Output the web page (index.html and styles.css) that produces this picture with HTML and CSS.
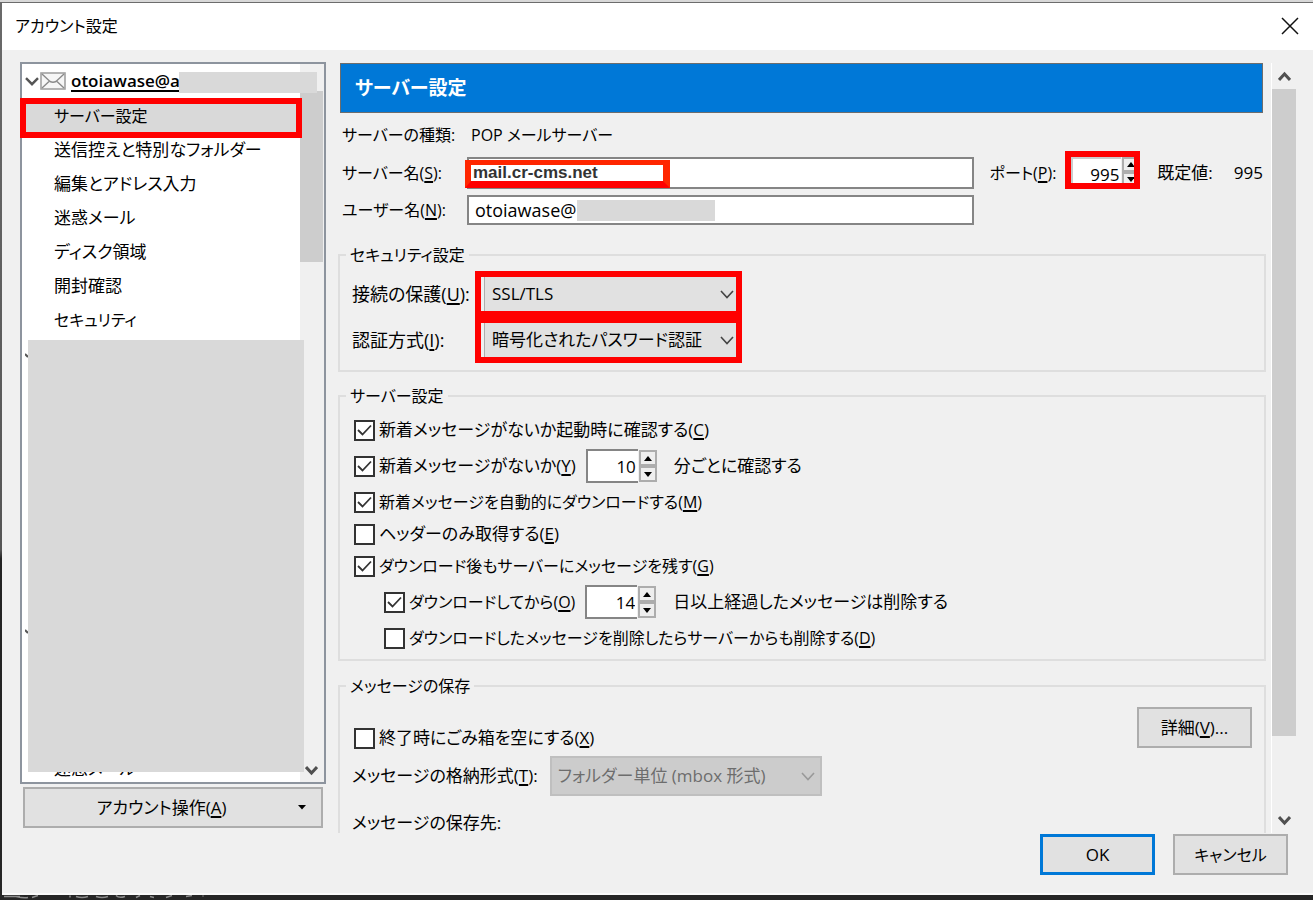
FILE: index.html
```html
<!DOCTYPE html>
<html lang="ja">
<head>
<meta charset="utf-8">
<title>アカウント設定</title>
<link rel="stylesheet" href="styles.css">
</head>
<body>
<div class="desktop">
  <main class="window">
    <header class="titlebar">
      <h1 class="titlebar-text">アカウント設定</h1>
      <button class="close" type="button" aria-label="閉じる">
        <svg width="18" height="18" viewBox="0 0 18 18"><path d="M1 1L17 17M17 1L1 17" fill="none" stroke="#111" stroke-width="1.5"/></svg>
      </button>
    </header>

    <div class="body">
      <nav class="sidebar">
        <div class="tree">
          <div class="tree-main">
            <div class="account">
              <svg class="account-chevron" width="14" height="9" viewBox="0 0 14 9"><path d="M1 1.2L7 7.2L13 1.2" fill="none" stroke="#555" stroke-width="2.4"/></svg>
              <svg class="account-mail" width="26" height="18" viewBox="0 0 26 18"><rect x="1" y="1" width="24" height="16" fill="#f6f6f6" stroke="#a2a2a2" stroke-width="1.6"/><path d="M2 2L10 9.5Q13 11 16 9.5L24 2M2 16L9 9.5M24 16L17 9.5" fill="none" stroke="#8a8a8a" stroke-width="1.4"/></svg>
              <a class="account-name" href="#account">otoiawase@a</a>
              <span class="account-mask"></span>
            </div>
            <ul class="pages">
              <li class="page selected compact"><a href="#server">サーバー設定</a></li>
              <li class="page"><a href="#copies">送信控えと特別なフォルダー</a></li>
              <li class="page"><a href="#composition">編集とアドレス入力</a></li>
              <li class="page"><a href="#junk">迷惑メール</a></li>
              <li class="page"><a href="#disk">ディスク領域</a></li>
              <li class="page"><a href="#receipts">開封確認</a></li>
              <li class="page compact"><a href="#security">セキュリティ</a></li>
            </ul>
            <div class="masked">
              <svg class="tick tick-first" width="3" height="5" viewBox="0 0 3 5"><path d="M0 1L3 4" stroke="#555" stroke-width="2"/></svg>
              <svg class="tick tick-second" width="3" height="5" viewBox="0 0 3 5"><path d="M0 1L3 4" stroke="#555" stroke-width="2"/></svg>
            </div>
            <div class="page-cut"><a href="#junk2">迷惑メール</a></div>
          </div>
          <div class="tree-scroll">
            <div class="tree-thumb"></div>
            <svg class="tree-down" width="13" height="11" viewBox="0 0 13 11"><path d="M1 2L6.500 8L12 2" fill="none" stroke="#505050" stroke-width="3"/></svg>
          </div>
        </div>
        <button class="button actions" type="button">
          <span class="actions-text">アカウント操作(<u>A</u>)</span>
          <svg width="8" height="5" viewBox="0 0 8 5"><path d="M0 0H8L4 4.500Z" fill="#000"/></svg>
        </button>
      </nav>

      <section class="pane">
        <form class="content">
          <h2 class="banner">サーバー設定</h2>

          <div class="server">
            <span class="compact">サーバーの種類:</span>
            <span class="compact kind-value">POP メールサーバー</span>
            <span></span>
            <label class="compact" for="host">サーバー名(<u>S</u>):</label>
            <div class="field">
              <input class="text host" id="host" type="text" value="mail.cr-cms.net">
              <span class="host-mark"></span>
            </div>
            <div class="port">
              <label class="compact" for="port">ポート(<u>P</u>):</label>
              <div class="port-mark">
                <div class="spin">
                  <input class="spin-value" id="port" type="text" inputmode="numeric" value="995">
                  <div class="spin-buttons">
                    <button class="step" type="button" aria-label="増やす"><svg width="8" height="5" viewBox="0 0 8 5"><path d="M0 5H8L4 0Z"/></svg></button>
                    <button class="step" type="button" aria-label="減らす"><svg width="8" height="5" viewBox="0 0 8 5"><path d="M0 0H8L4 5Z"/></svg></button>
                  </div>
                </div>
              </div>
              <span>既定値:</span>
              <span class="port-default">995</span>
            </div>
            <label class="compact" for="user">ユーザー名(<u>N</u>):</label>
            <div class="field">
              <input class="text user" id="user" type="text" value="otoiawase@">
              <span class="user-mask"></span>
            </div>
          </div>

          <fieldset class="group security">
            <legend class="compact">セキュリティ設定</legend>
            <div class="choice">
              <label for="conn">接続の保護(<u>U</u>):</label>
              <div class="choice-mark"><select class="select" id="conn"><option>SSL/TLS</option></select></div>
            </div>
            <div class="choice">
              <label for="auth">認証方式(<u>I</u>):</label>
              <div class="choice-mark"><select class="select" id="auth"><option>暗号化されたパスワード認証</option></select></div>
            </div>
          </fieldset>

          <fieldset class="group options">
            <legend class="compact">サーバー設定</legend>
            <div class="option"><input class="check" type="checkbox" id="c1" checked><label for="c1">新着メッセージがないか起動時に確認する(<u>C</u>)</label></div>
            <div class="option tall">
              <input class="check" type="checkbox" id="c2" checked><label for="c2">新着メッセージがないか(<u>Y</u>)</label>
              <div class="spin boxed">
                <input class="spin-value" id="minutes" type="text" inputmode="numeric" value="10">
                <div class="spin-buttons">
                  <button class="step" type="button" aria-label="増やす"><svg width="8" height="5" viewBox="0 0 8 5"><path d="M0 5H8L4 0Z"/></svg></button>
                  <button class="step" type="button" aria-label="減らす"><svg width="8" height="5" viewBox="0 0 8 5"><path d="M0 0H8L4 5Z"/></svg></button>
                </div>
              </div>
              <label for="minutes">分ごとに確認する</label>
            </div>
            <div class="option compact"><input class="check" type="checkbox" id="c3" checked><label for="c3">新着メッセージを自動的にダウンロードする(<u>M</u>)</label></div>
            <div class="option"><input class="check" type="checkbox" id="c4"><label for="c4">ヘッダーのみ取得する(<u>E</u>)</label></div>
            <div class="option compact"><input class="check" type="checkbox" id="c5" checked><label for="c5">ダウンロード後もサーバーにメッセージを残す(<u>G</u>)</label></div>
            <div class="option tall nested">
              <input class="check" type="checkbox" id="c6" checked><label class="compact" for="c6">ダウンロードしてから(<u>O</u>)</label>
              <div class="spin boxed">
                <input class="spin-value" id="days" type="text" inputmode="numeric" value="14">
                <div class="spin-buttons">
                  <button class="step" type="button" aria-label="増やす"><svg width="8" height="5" viewBox="0 0 8 5"><path d="M0 5H8L4 0Z"/></svg></button>
                  <button class="step" type="button" aria-label="減らす"><svg width="8" height="5" viewBox="0 0 8 5"><path d="M0 0H8L4 5Z"/></svg></button>
                </div>
              </div>
              <label for="days">日以上経過したメッセージは削除する</label>
            </div>
            <div class="option nested compact"><input class="check" type="checkbox" id="c7"><label for="c7">ダウンロードしたメッセージを削除したらサーバーからも削除する(<u>D</u>)</label></div>
          </fieldset>

          <fieldset class="group storage">
            <legend class="compact">メッセージの保存</legend>
            <div class="storage-grid">
              <div class="storage-main">
                <div class="option"><input class="check" type="checkbox" id="c8"><label for="c8">終了時にごみ箱を空にする(<u>X</u>)</label></div>
                <div class="store">
                  <label for="store">メッセージの格納形式(<u>T</u>):</label>
                  <select class="select store-select" id="store" disabled><option>フォルダー単位 (mbox 形式)</option></select>
                </div>
                <p class="store-path">メッセージの保存先:</p>
              </div>
              <button class="button" type="button">詳細(<u>V</u>)...</button>
            </div>
          </fieldset>
        </form>
        <div class="scroll">
          <svg width="13" height="11" viewBox="0 0 13 11"><path d="M1 9L6.500 3L12 9" fill="none" stroke="#505050" stroke-width="3"/></svg>
          <div class="scroll-track"><div class="scroll-thumb"></div></div>
          <svg width="13" height="11" viewBox="0 0 13 11"><path d="M1 2L6.500 8L12 2" fill="none" stroke="#505050" stroke-width="3"/></svg>
        </div>
      </section>
    </div>

    <footer class="footer">
      <button class="button primary" type="button">OK</button>
      <button class="button compact" type="button">キャンセル</button>
    </footer>
  </main>
  <svg class="behind" width="210" height="4" viewBox="0 0 210 4"><path d="M2 1H18M14 1Q22 3 26 2M30 2L36 0M68 0V2M74 1Q80 3 86 1M94 1Q100 3 106 1M114 0Q117 3 123 1M134 2L138 0M148 1L152 2M164 2L170 0M184 1L190 0M201 0V1" fill="none" stroke="#8c8c8c" stroke-width="1.500"/></svg>
</div>
</body>
</html>
```
FILE: styles.css
```css
* { box-sizing: border-box; }

body {
  margin: 0;
  color: #000;
  background: #262626;
  font: 17px/24px "Open Sans", "Noto Sans CJK JP", sans-serif;
  font-feature-settings: "palt";
}

input, select, button { font: inherit; font-feature-settings: inherit; color: inherit; margin: 0; }
a { color: inherit; text-decoration: none; }
u { text-underline-offset: 2px; text-decoration-thickness: 2px; }
label, legend, span, a, button { white-space: nowrap; }
.compact { font-size: 16px; }

.desktop {
  height: 100vh;
  min-height: 600px;
  display: flex;
  flex-direction: column;
  padding-left: 2px;
  background: linear-gradient(#6a6a6a, #555 61%, #222 62%, #262626);
  border-top: 2px solid #d8d8d8;
  overflow: hidden;
}

.window {
  flex: 1;
  min-height: 0;
  display: flex;
  flex-direction: column;
  background: #f0f0f0;
  border-top: 1px solid #6c6c6c;
  border-bottom: 2px solid #fafafa;
}

.behind { display: block; flex: none; height: 5px; width: 210px; box-shadow: 0 0 0 100vw #262626; clip-path: inset(0 -100vw 0 0); background: #262626; }

.titlebar {
  flex: none;
  display: flex;
  align-items: center;
  justify-content: space-between;
  height: 47px;
  padding: 0 14px 2px 13px;
  background: #fff;
}
.titlebar-text { margin: 0; font-size: 16px; font-weight: 400; }
.close { display: flex; padding: 0; border: 0; background: none; }

.body {
  flex: 1;
  min-height: 0;
  display: flex;
  gap: 12px;
  padding: 12px 17px 0 18px;
}

/* account tree */
.sidebar { flex: none; width: 306px; display: flex; flex-direction: column; padding-bottom: 5px; }
.tree { flex: 1; min-height: 0; display: flex; border: 2px solid #8d949e; background: #fff; }
.tree-main { flex: 1; min-width: 0; display: flex; flex-direction: column; }
.account { position: relative; flex: none; display: flex; align-items: center; height: 34px; padding-left: 3px; }
.account-mail { margin: 0 5px 0 1px; }
.account-name { width: 108px; overflow: hidden; font-weight: 600; text-decoration: underline; text-decoration-thickness: 2px; text-underline-offset: 3px; }
.account-mask { position: absolute; z-index: 2; left: 157px; top: 8px; width: 138px; height: 21px; background: #d9d9d9; }
.pages { flex: none; margin: 0; padding: 1px 0 0; list-style: none; }
.page { position: relative; height: 34px; padding-left: 32px; line-height: 34px; }
.page.selected { background: #d9d9d9; }
.page.selected::after { content: ""; position: absolute; z-index: 2; inset: -1px -2px -5px -2px; border: 6px solid #f00; }
.masked { position: relative; z-index: 1; flex: 1; min-height: 0; margin: 3px -4px 0 6px; background: #d9d9d9; }
.tick { position: absolute; left: -3px; }
.tick-first { top: 3%; }
.tick-second { top: 67%; }
.page-cut { flex: none; display: flex; align-items: flex-end; height: 10px; padding-left: 32px; line-height: 26px; overflow: hidden; }
.tree-scroll { flex: none; width: 24px; display: flex; flex-direction: column; justify-content: space-between; align-items: center; padding: 27px 1px 6px 0; background: #f0f0f0; }
.tree-thumb { width: 100%; height: 25%; background: #cdcdcd; }

.button {
  flex: none;
  min-width: 115px;
  height: 41px;
  padding: 0 12px;
  border: 2px solid #adadad;
  border-radius: 0;
  background: #e1e1e1;
}
.button.primary { border: 3px solid #0078d7; }
.actions { display: flex; align-items: center; margin: 3px 3px 0; padding: 0 15px 0 0; }
.actions-text { flex: 1; text-align: center; }

/* settings pane */
.pane { flex: 1; min-width: 0; display: flex; gap: 5px; padding-top: 1px; }
.content { flex: 1; min-width: 0; overflow: hidden; }
.banner {
  margin: 0 3px 0 2px;
  padding: 0 14px;
  border: 1px solid #6d6d6d;
  background: #0078d7;
  color: #fff;
  font-size: 19px;
  font-weight: 700;
  line-height: 48px;
}
.server {
  display: grid;
  grid-template-columns: 125px minmax(0, 1fr) auto;
  grid-template-rows: 38px 37px 38px;
  align-items: center;
  margin: 3px 3px 0 4px;
}
.kind-value { padding-left: 4px; }
.field { position: relative; display: flex; }
.text { width: 100%; padding: 0 6px; border: 2px solid #858585; border-radius: 0; background: #fff; }
.host { height: 32px; padding-left: 4px; color: #333; font-family: "Liberation Sans", sans-serif; font-weight: 700; }
.user { height: 30px; font-size: 18px; }
.host-mark { position: absolute; left: -2px; top: 3px; width: 205px; height: 28px; border: 5px solid #ff2600; border-width: 5px 7px 7px 6px; border-bottom-color: #f00; }
.user-mask { position: absolute; left: 110px; top: 5px; width: 138px; height: 21px; background: #d9d9d9; }
.port { display: flex; align-items: center; padding-left: 16px; }
.port-mark { margin: -5px 17px 0 9px; width: 75px; height: 38px; border: 6px solid #f00; background: #f0f0f0; overflow: hidden; }
.port-default { margin-left: 21px; }

.spin { display: flex; align-items: center; }
.spin-value { width: 52px; height: 34px; padding: 0 2px; border: 2px solid #858585; border-right: 0; border-radius: 0; background: #fff; text-align: right; }
.spin-buttons { display: flex; flex-direction: column; margin-left: 1px; }
.step { display: flex; align-items: center; justify-content: center; width: 18px; height: 16px; padding: 0; border: 2px solid #adadad; border-radius: 0; background: #eee; }
.port-mark .spin { align-items: flex-start; }
.port-mark .spin-value { width: 50px; border-color: #ccc; }
.port-mark .step { height: 15px; }
.boxed { margin: 0 17px 0 10px; }

.group { min-width: 0; margin: 0; padding: 0 12px; border: 2px solid #dedede; }
.group legend { margin-left: -6px; padding: 0 4px; }
.security { margin-top: 14px; padding-bottom: 7px; }
.security legend { margin-bottom: 4px; }
.choice { display: flex; align-items: center; }
.choice label { width: 123px; font-size: 18px; }
.choice-mark { width: 267px; height: 46px; padding-left: 3px; border: 6px solid #f00; }
.select {
  appearance: none;
  width: 100%;
  height: 100%;
  padding: 0 28px 0 7px;
  border: 0 solid #adadad;
  border-left-width: 1px;
  border-radius: 0;
  background: #e1e1e1 url('data:image/svg+xml,<svg xmlns="http://www.w3.org/2000/svg" width="14" height="9"><path d="M1 1L7 7.500L13 1" fill="none" stroke="%23444" stroke-width="1.600"/></svg>') no-repeat right 2px center;
}
.options { margin-top: 12px; padding: 0 14px 5px; }
.options legend, .storage legend { margin-left: -8px; }
.options legend { margin-bottom: 6px; }
.option { display: flex; align-items: center; gap: 4px; height: 32px; }
.option.tall { height: 40px; gap: 0; }
.tall .check { margin-right: 4px; }
.nested { padding-left: 30px; }
.check {
  appearance: none;
  flex: none;
  width: 21px;
  height: 21px;
  border: 2px solid #333;
  border-radius: 0;
  background: #fff;
}
.check:checked { background: #fff url('data:image/svg+xml,<svg xmlns="http://www.w3.org/2000/svg" width="17" height="17"><path d="M2 8L6.500 12.500L15 3.500" fill="none" stroke="%23333" stroke-width="1.800"/></svg>') center no-repeat; }

.storage { margin-top: 13px; padding: 0 12px 30px 14px; }
.storage-grid { display: flex; justify-content: space-between; align-items: flex-start; padding-top: 9px; }
.storage-main { padding-top: 15px; }
.store { display: flex; align-items: center; height: 40px; margin: 2px 0 0 -2px; }
.store-select { width: 272px; margin-left: 12px; padding-left: 6px; border-width: 2px; border-color: #bfbfbf; background-color: #ccc; color: #6d6d6d; opacity: 1; }
.store-select:disabled { background-image: url('data:image/svg+xml,<svg xmlns="http://www.w3.org/2000/svg" width="14" height="9"><path d="M1 1L7 7.500L13 1" fill="none" stroke="%23999" stroke-width="1.600"/></svg>'); background-position: right 5px center; }
.store-path { margin: 15px 0 0 -2px; }

.scroll { flex: none; width: 25px; display: flex; flex-direction: column; align-items: center; padding: 8px 0 7px; border-left: 1px solid #fff; }
.scroll-track { flex: 1; align-self: stretch; margin: 7px 0; }
.scroll-thumb { height: 90%; background: #cdcdcd; }

.footer { flex: none; display: flex; justify-content: flex-end; gap: 18px; padding: 1px 25px 18px; }
.footer .button { margin: 0; }
```
